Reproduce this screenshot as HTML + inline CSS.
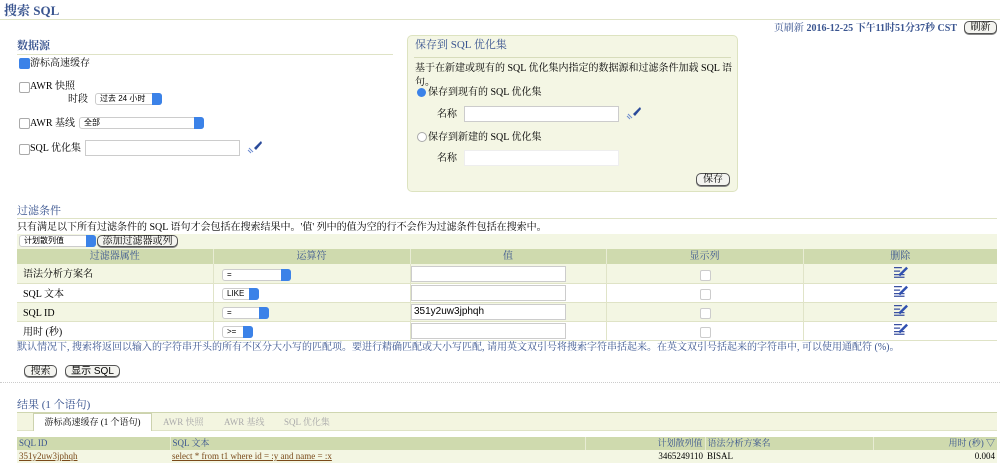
<!DOCTYPE html>
<html><head><meta charset="utf-8"><style>
body{margin:0;width:1000px;height:466px;background:#fff;font-family:"Liberation Serif","Noto Serif CJK SC",serif;font-size:10px;line-height:12px;color:#000;position:relative;overflow:hidden}
.a{position:absolute;white-space:nowrap;line-height:15px}
.h{color:#3a5590;font-weight:bold}
.line{position:absolute;height:1px;background:#dfe3c6}
.cb{position:absolute;width:9px;height:9px;border:1px solid #aaa;border-radius:2px;background:#fff}
.sel{position:absolute;height:12px;border:1px solid #ccc;border-radius:3px;background:#fff;font-family:"Liberation Sans","Noto Sans CJK SC",sans-serif;font-size:8px;line-height:10px;padding-left:4px;box-sizing:border-box}
.sel:after{content:"";position:absolute;right:-1px;top:-1px;width:10px;height:12px;background:#3b82e8;border-radius:0 3px 3px 0}
.inp{position:absolute;border:1px solid #ccc;background:#fff;box-sizing:border-box}
.btn{position:absolute;border:1px solid #555;border-radius:5px;background:#f4f4f0;font-size:10px;text-align:center;box-sizing:border-box;line-height:11px;box-shadow:0 1px 0 #888}
table{position:absolute;border-collapse:collapse;line-height:11px}
td{padding:0 6px;box-sizing:border-box}
.fl{position:absolute;width:16px;height:14px}
</style></head><body>
<div class="a h" style="left:4px;top:3px;font-size:13px;line-height:15px">搜索 SQL</div>
<div class="line" style="left:0;top:19px;width:1000px"></div>
<div class="a" style="right:43px;top:21px;color:#3a5590;font-size:10px">页刷新 <b>2016-12-25 下午11时51分37秒 CST</b></div>
<div class="btn" style="left:964px;top:21px;width:33px;height:13px">刷新</div>

<div class="a h" style="left:17px;top:39px;font-size:11px;line-height:15px">数据源</div>
<div class="line" style="left:17px;top:54px;width:376px"></div>
<div class="cb" style="left:19px;top:58px;background:#3b82e8;border-color:#3b82e8"></div>
<div class="a" style="left:30px;top:56px">游标高速缓存</div>
<div class="cb" style="left:19px;top:82px"></div><div class="a" style="left:30px;top:79px">AWR 快照</div>
<div class="a" style="left:68px;top:92px">时段</div>
<div class="sel" style="left:95px;top:93px;width:67px">过去 24 小时</div>
<div class="cb" style="left:19px;top:118px"></div><div class="a" style="left:30px;top:116px">AWR 基线</div>
<div class="sel" style="left:79px;top:117px;width:125px">全部</div>
<div class="cb" style="left:19px;top:144px"></div><div class="a" style="left:30px;top:141px">SQL 优化集</div>
<div class="inp" style="left:85px;top:140px;width:155px;height:16px"></div>
<svg class="fl" style="left:246px;top:140px" viewBox="0 0 16 14"><path d="M15 1 L8 8 L10 10 L16 3Z" fill="#2a4a9a"/><path d="M4 9 L7 12 M2 10 L5 13 M3 8 L6 11" stroke="#6a8ad0" stroke-width="1"/></svg>

<div class="a" style="left:407px;top:35px;width:331px;height:157px;background:#f4f6e4;border:1px solid #dde3c0;border-radius:5px;box-sizing:border-box"></div>
<div class="a h" style="left:415px;top:38px;font-size:11px;line-height:15px;font-weight:normal">保存到 SQL 优化集</div>
<div class="line" style="left:414px;top:57px;width:317px;background:#d7dcbb"></div>
<div class="a" style="left:415px;top:62px;line-height:14px">基于在新建或现有的 SQL 优化集内指定的数据源和过滤条件加载 SQL 语<br>句。</div>
<div class="a" style="left:417px;top:88px;width:9px;height:9px;border-radius:50%;background:#3b82e8"></div>
<div class="a" style="left:428px;top:85px">保存到现有的 SQL 优化集</div>
<div class="a" style="left:437px;top:107px">名称</div>
<div class="inp" style="left:464px;top:106px;width:155px;height:16px"></div>
<svg class="fl" style="left:625px;top:106px" viewBox="0 0 16 14"><path d="M15 1 L8 8 L10 10 L16 3Z" fill="#2a4a9a"/><path d="M4 9 L7 12 M2 10 L5 13 M3 8 L6 11" stroke="#6a8ad0" stroke-width="1"/></svg>
<div class="a" style="left:417px;top:132px;width:8px;height:8px;border-radius:50%;border:1px solid #aaa;background:#fff"></div>
<div class="a" style="left:428px;top:130px">保存到新建的 SQL 优化集</div>
<div class="a" style="left:437px;top:151px">名称</div>
<div class="inp" style="left:464px;top:150px;width:155px;height:16px;border-color:#eee"></div>
<div class="btn" style="left:696px;top:173px;width:34px;height:13px">保存</div>

<div class="a h" style="left:17px;top:204px;font-size:11px;line-height:15px;font-weight:normal">过滤条件</div>
<div class="line" style="left:17px;top:218px;width:980px"></div>
<div class="a" style="left:17px;top:220px">只有满足以下所有过滤条件的 SQL 语句才会包括在搜索结果中。'值' 列中的值为空的行不会作为过滤条件包括在搜索中。</div>
<div class="a" style="left:17px;top:234px;width:980px;height:15px;background:#f3f6e3"></div>
<div class="sel" style="left:19px;top:235px;width:77px">计划散列值</div>
<div class="btn" style="left:97px;top:235px;width:81px;height:12px">添加过滤器或列</div>
<table style="left:17px;top:249px;width:980px;font-size:10px">
<tr style="background:#cfdaae;color:#3a5590;height:15px;text-align:center"><td style="width:196px;border-right:1px solid #e8ecd4">过滤器属性</td><td style="width:197px;border-right:1px solid #e8ecd4">运算符</td><td style="width:196px;border-right:1px solid #e8ecd4">值</td><td style="width:197px;border-right:1px solid #e8ecd4">显示列</td><td>删除</td></tr>
<tr style="background:#f3f6e3;height:19px"><td style="padding-top:3px">语法分析方案名</td><td></td><td></td><td></td><td></td></tr>
<tr style="height:19px;border-top:1px solid #dfe3c6"><td style="padding-top:3px">SQL 文本</td><td></td><td></td><td></td><td></td></tr>
<tr style="background:#f3f6e3;height:19px;border-top:1px solid #dfe3c6"><td style="padding-top:3px">SQL ID</td><td></td><td></td><td></td><td></td></tr>
<tr style="height:19px;border-top:1px solid #dfe3c6;border-bottom:1px solid #dfe3c6"><td style="padding-top:3px">用时 (秒)</td><td></td><td></td><td></td><td></td></tr>
</table>
<div class="a" style="left:213px;top:264px;width:1px;height:76px;background:#e0e4c8"></div>
<div class="a" style="left:410px;top:264px;width:1px;height:76px;background:#e0e4c8"></div>
<div class="a" style="left:606px;top:264px;width:1px;height:76px;background:#e0e4c8"></div>
<div class="a" style="left:803px;top:264px;width:1px;height:76px;background:#e0e4c8"></div>
<div class="sel" style="left:222px;top:269px;width:69px">=</div>
<div class="sel" style="left:222px;top:288px;width:37px">LIKE</div>
<div class="sel" style="left:222px;top:307px;width:47px">=</div>
<div class="sel" style="left:222px;top:326px;width:31px">&gt;=</div>
<div class="inp" style="left:411px;top:266px;width:155px;height:16px"></div>
<div class="inp" style="left:411px;top:285px;width:155px;height:16px"></div>
<div class="inp" style="left:411px;top:304px;width:155px;height:16px;font-family:'Liberation Sans',sans-serif;font-size:10px;padding-left:2px;line-height:14px">351y2uw3jphqh</div>
<div class="inp" style="left:411px;top:323px;width:155px;height:16px"></div>
<div class="cb" style="left:700px;top:270px;border-color:#ccc"></div><div class="cb" style="left:700px;top:289px;border-color:#ccc"></div><div class="cb" style="left:700px;top:308px;border-color:#ccc"></div><div class="cb" style="left:700px;top:327px;border-color:#ccc"></div>
<svg class="fl" style="left:893px;top:265px" viewBox="0 0 16 16"><path d="M0 3h9M0 7h7M0 11h12M0 14h12" stroke="#3a50a0" stroke-width="1.5"/><path d="M5 11 L14 2 L16 4 L7 13Z" fill="#3050b0"/></svg>
<svg class="fl" style="left:893px;top:284px" viewBox="0 0 16 16"><path d="M0 3h9M0 7h7M0 11h12M0 14h12" stroke="#3a50a0" stroke-width="1.5"/><path d="M5 11 L14 2 L16 4 L7 13Z" fill="#3050b0"/></svg>
<svg class="fl" style="left:893px;top:303px" viewBox="0 0 16 16"><path d="M0 3h9M0 7h7M0 11h12M0 14h12" stroke="#3a50a0" stroke-width="1.5"/><path d="M5 11 L14 2 L16 4 L7 13Z" fill="#3050b0"/></svg>
<svg class="fl" style="left:893px;top:322px" viewBox="0 0 16 16"><path d="M0 3h9M0 7h7M0 11h12M0 14h12" stroke="#3a50a0" stroke-width="1.5"/><path d="M5 11 L14 2 L16 4 L7 13Z" fill="#3050b0"/></svg>
<div class="a" style="left:17px;top:340px;color:#3a5590">默认情况下, 搜索将返回以输入的字符串开头的所有不区分大小写的匹配项。要进行精确匹配或大小写匹配, 请用英文双引号将搜索字符串括起来。在英文双引号括起来的字符串中, 可以使用通配符 (%)。</div>
<div class="btn" style="left:24px;top:365px;width:33px;height:12px">搜索</div>
<div class="btn" style="left:65px;top:365px;width:55px;height:12px;font-family:'Liberation Sans','Noto Sans CJK SC',sans-serif">显示 SQL</div>
<div class="a" style="left:0;top:382px;width:1000px;border-top:1px dotted #ccc"></div>

<div class="a h" style="left:17px;top:398px;font-size:11px;line-height:15px;font-weight:normal">结果 (1 个语句)</div>
<div class="line" style="left:17px;top:412px;width:980px;background:#cfd6b0"></div>
<div class="a" style="left:17px;top:413px;width:980px;height:17px;background:#f3f5e0;border-bottom:1px solid #dfe3c6"></div>
<div class="a" style="left:33px;top:413px;width:119px;height:18px;background:#fff;border:1px solid #ccd2ae;border-bottom:none;box-sizing:border-box;font-size:9px;text-align:center;line-height:16px">游标高速缓存 (1 个语句)</div>
<div class="a" style="left:163px;top:415px;color:#aaa;font-size:9px">AWR 快照</div>
<div class="a" style="left:224px;top:415px;color:#aaa;font-size:9px">AWR 基线</div>
<div class="a" style="left:284px;top:415px;color:#aaa;font-size:9px">SQL 优化集</div>
<table style="left:17px;top:437px;width:980px;font-size:9px">
<tr style="background:#cfdaae;color:#3a5590;height:13px"><td style="width:153px;padding:0 2px;border-right:1px solid #e8ecd4">SQL ID</td><td style="width:415px;padding:0 2px;border-right:1px solid #e8ecd4">SQL 文本</td><td style="width:120px;text-align:right;padding:0 2px;border-right:1px solid #e8ecd4">计划散列值</td><td style="width:168px;padding:0 2px;border-right:1px solid #e8ecd4">语法分析方案名</td><td style="text-align:right;padding:0 2px">用时 (秒) ▽</td></tr>
<tr style="background:#f3f6e3;height:13px"><td style="padding:0 2px;color:#7a4a1a;text-decoration:underline">351y2uw3jphqh</td><td style="padding:0 2px;color:#7a4a1a;text-decoration:underline">select * from t1 where id = :y and name = :x</td><td style="text-align:right;padding:0 2px">3465249110</td><td style="padding:0 2px">BISAL</td><td style="text-align:right;padding:0 2px">0.004</td></tr>
</table>
</body></html>
